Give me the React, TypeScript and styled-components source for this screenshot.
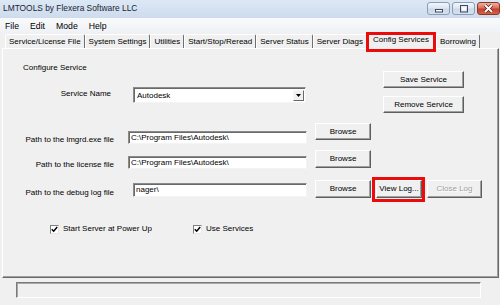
import styled, { createGlobalStyle, css } from 'styled-components';

const Global = createGlobalStyle`
  html, body {
    margin: 0;
    padding: 0;
    background: #f0f0f0;
  }
  body {
    font-family: 'Liberation Sans', Arial, sans-serif;
    font-size: 8px;
    color: #000;
  }
`;

const redMark = (l: number, r: number, t: number, b: number) => css`
  &::after {
    content: '';
    position: absolute;
    left: ${-l}px;
    right: ${-r}px;
    top: ${-t}px;
    bottom: ${-b}px;
    border: 3px solid #ec0b0b;
    pointer-events: none;
  }
`;

const Window = styled.div`
  width: 500px;
  height: 305px;
  overflow: hidden;
  display: flex;
  flex-direction: column;
  background: #f0f0f0;
`;

const TitleBar = styled.div`
  height: 18px;
  flex-shrink: 0;
  display: flex;
  align-items: flex-start;
  justify-content: space-between;
  background: linear-gradient(#dde8f5, #cddbed);
`;

const Title = styled.span`
  font-size: 8.4px;
  line-height: 16px;
  padding-left: 3px;
  color: #1b2533;
`;

const WinControls = styled.div`
  display: flex;
  gap: 2px;
  padding-top: 2px;
`;

const WinBtn = styled.div<{ $close?: boolean }>`
  width: 23px;
  height: 13px;
  box-sizing: border-box;
  border-radius: 3px;
  display: flex;
  align-items: center;
  justify-content: center;
  border: 1px solid ${(p) => (p.$close ? '#8e3524' : '#8b9cb5')};
  background: ${(p) =>
    p.$close
      ? 'linear-gradient(#eeb1a2, #d8705c 45%, #c4402a 55%, #d2634a)'
      : 'linear-gradient(#f3f6fb, #dde6f2 45%, #cbd8ea 55%, #d6e1ef)'};
`;

const MenuBar = styled.div`
  height: 15px;
  flex-shrink: 0;
  display: flex;
  align-items: center;
  gap: 11px;
  padding-left: 5px;
  font-size: 8.7px;
  background: linear-gradient(#f9fafc, #eef1f5);
`;

const TabStrip = styled.div`
  height: 15px;
  flex-shrink: 0;
  display: flex;
  align-items: flex-end;
  padding-left: 5px;
  position: relative;
  z-index: 2;
`;

const Tab = styled.div<{ $active?: boolean; $mark?: boolean }>`
  position: relative;
  box-sizing: border-box;
  height: ${(p) => (p.$active ? 17 : 14)}px;
  margin: 0 ${(p) => (p.$active ? 1 : 0)}px ${(p) => (p.$active ? -1 : 0)}px
    ${(p) => (p.$active ? 1 : 0)}px;
  padding: 0 ${(p) => (p.$active ? 5 : 3)}px 0 ${(p) => (p.$active ? 4 : 3)}px;
  line-height: ${(p) => (p.$active ? 14 : 13)}px;
  background: #f0f0f0;
  border-top: 1px solid #fff;
  border-left: 1px solid #fff;
  border-right: 1px solid #6f6f6f;
  border-radius: 2px 2px 0 0;
  white-space: nowrap;
  ${(p) => p.$mark && redMark(3, 2, 1, 3)}
`;

const Panel = styled.div`
  margin: 0 1px 0 2px;
  height: 230px;
  flex-shrink: 0;
  box-sizing: border-box;
  border: 1px solid;
  border-color: #fff #696969 #696969 #fff;
  box-shadow: inset -1px -1px #a0a0a0;
  display: flex;
  flex-direction: column;
`;

const TopSection = styled.div`
  display: flex;
  margin-top: 14px;
`;

const LeftCol = styled.div`
  display: flex;
  flex-direction: column;
`;

const Heading = styled.div`
  line-height: 10px;
  margin-left: 20px;
`;

const RightCol = styled.div`
  margin-left: auto;
  margin-right: 34px;
  margin-top: 8px;
  display: flex;
  flex-direction: column;
  gap: 8px;
`;

const Row = styled.div<{ $gap: number }>`
  display: flex;
  align-items: flex-start;
  margin-top: ${(p) => p.$gap}px;
`;

const Label = styled.div<{ $w: number; $drop: number }>`
  width: ${(p) => p.$w}px;
  text-align: right;
  line-height: 10px;
  margin-top: ${(p) => p.$drop}px;
  white-space: nowrap;
`;

const Field = styled.div<{ $left: number; $w: number; $drop: number; $h: number }>`
  box-sizing: border-box;
  margin-left: ${(p) => p.$left}px;
  margin-top: ${(p) => p.$drop}px;
  width: ${(p) => p.$w}px;
  height: ${(p) => p.$h}px;
  background: #fff;
  border: 1px solid;
  border-color: #8a8a8a #f4f4f4 #f4f4f4 #8a8a8a;
  box-shadow: inset 1px 1px #696969;
  padding-left: 2px;
  line-height: ${(p) => p.$h - 2}px;
  white-space: nowrap;
  overflow: hidden;
`;

const Combo = styled.div`
  box-sizing: border-box;
  margin-left: 22px;
  width: 173px;
  height: 16px;
  background: #fff;
  border: 1px solid;
  border-color: #8a8a8a #f4f4f4 #f4f4f4 #8a8a8a;
  box-shadow: inset 1px 1px #696969;
  display: flex;
  align-items: center;
  padding: 2px 1px 1px 3px;
`;

const ComboText = styled.span`
  flex: 1;
  line-height: 11px;
`;

const ComboArrow = styled.div`
  box-sizing: border-box;
  width: 11px;
  height: 11px;
  background: #f0f0f0;
  border: 1px solid;
  border-color: #f8f8f8 #696969 #696969 #f8f8f8;
  display: flex;
  align-items: center;
  justify-content: center;
`;

const Button = styled.div<{ $w: number; $h?: number; $left?: number; $off?: boolean; $mark?: boolean }>`
  position: relative;
  box-sizing: border-box;
  width: ${(p) => p.$w}px;
  height: ${(p) => p.$h ?? 17}px;
  margin-left: ${(p) => p.$left ?? 0}px;
  flex-shrink: 0;
  background: #f0f0f0;
  border: 1px solid;
  border-color: #fff #5e5e5e #5e5e5e #fff;
  box-shadow: inset -1px -1px #a0a0a0;
  text-align: center;
  line-height: ${(p) => (p.$h ?? 17) - 2}px;
  white-space: nowrap;
  color: ${(p) => (p.$off ? '#a0a0a0' : '#000')};
  text-shadow: ${(p) => (p.$off ? '1px 1px #fff' : 'none')};
  ${(p) => p.$mark && redMark(5, 4, 4, 5)}
`;

const CheckRow = styled.div`
  display: flex;
  align-items: center;
  margin-top: 26px;
  padding-left: 47px;
  height: 10px;
`;

const CheckItem = styled.label<{ $w?: number }>`
  display: flex;
  align-items: center;
  gap: 4px;
  width: ${(p) => (p.$w ? `${p.$w}px` : 'auto')};
  line-height: 10px;
`;

const Box = styled.span`
  box-sizing: border-box;
  width: 9px;
  height: 9px;
  background: #fff;
  border: 1px solid;
  border-color: #808080 #e8e8e8 #e8e8e8 #808080;
  display: flex;
  align-items: center;
  justify-content: center;
`;

const StatusArea = styled.div`
  flex: 1;
  padding: 4px 0 0 16px;
`;

const StatusBox = styled.div`
  box-sizing: border-box;
  width: 465px;
  height: 16px;
  border: 1px solid;
  border-color: #7a7a7a #fff #fff #7a7a7a;
  box-shadow: inset 1px 1px #a8a8a8;
`;

function Check() {
  return (
    <Box>
      <svg width="7" height="7" viewBox="0 0 7 7">
        <path d="M0.8 3.2 L2.7 5.2 L6.2 1" fill="none" stroke="#000" strokeWidth="1.5" />
      </svg>
    </Box>
  );
}

const tabs = [
  'Service/License File',
  'System Settings',
  'Utilities',
  'Start/Stop/Reread',
  'Server Status',
  'Server Diags',
  'Config Services',
  'Borrowing',
];

export default function App() {
  return (
    <>
      <Global />
      <Window>
        <TitleBar>
          <Title>LMTOOLS by Flexera Software LLC</Title>
          <WinControls>
            <WinBtn>
              <svg width="10" height="8" viewBox="0 0 10 8">
                <rect x="1.5" y="4.5" width="7" height="2.5" fill="#fff" stroke="#3c4a5e" strokeWidth="1" />
              </svg>
            </WinBtn>
            <WinBtn>
              <svg width="10" height="8" viewBox="0 0 10 8">
                <rect x="1.5" y="0.5" width="7" height="6.5" fill="none" stroke="#3c4a5e" strokeWidth="1" />
                <rect x="3" y="2.5" width="4" height="3" fill="#fff" />
              </svg>
            </WinBtn>
            <WinBtn $close>
              <svg width="11" height="9" viewBox="0 0 11 9">
                <path d="M2 1 L9 8 M9 1 L2 8" stroke="#5a1d12" strokeWidth="3.2" />
                <path d="M2 1 L9 8 M9 1 L2 8" stroke="#fff" strokeWidth="1.8" />
              </svg>
            </WinBtn>
          </WinControls>
        </TitleBar>

        <MenuBar>
          <span>File</span>
          <span>Edit</span>
          <span>Mode</span>
          <span>Help</span>
        </MenuBar>

        <TabStrip>
          {tabs.map((t) => (
            <Tab key={t} $active={t === 'Config Services'} $mark={t === 'Config Services'}>
              {t}
            </Tab>
          ))}
        </TabStrip>

        <Panel>
          <TopSection>
            <LeftCol>
              <Heading>Configure Service</Heading>
              <Row $gap={14}>
                <Label $w={108} $drop={2}>Service Name</Label>
                <Combo>
                  <ComboText>Autodesk</ComboText>
                  <ComboArrow>
                    <svg width="5" height="3" viewBox="0 0 5 3">
                      <path d="M0 0 H5 L2.5 3 Z" fill="#000" />
                    </svg>
                  </ComboArrow>
                </Combo>
              </Row>
            </LeftCol>
            <RightCol>
              <Button $w={81}>Save Service</Button>
              <Button $w={81}>Remove Service</Button>
            </RightCol>
          </TopSection>

          <Row $gap={10}>
            <Label $w={111} $drop={12}>Path to the lmgrd.exe file</Label>
            <Field $left={14} $w={179} $drop={8} $h={13}>C:\Program Files\Autodesk\</Field>
            <Button $w={56} $left={8}>Browse</Button>
          </Row>

          <Row $gap={5}>
            <Label $w={111} $drop={10}>Path to the license file</Label>
            <Field $left={14} $w={179} $drop={6} $h={13}>C:\Program Files\Autodesk\</Field>
            <Button $w={56} $h={18} $left={8}>Browse</Button>
          </Row>

          <Row $gap={10}>
            <Label $w={111} $drop={8}>Path to the debug log file</Label>
            <Field $left={19} $w={174} $drop={3} $h={14}>nager\</Field>
            <Button $w={56} $h={18} $left={8}>Browse</Button>
            <Button $w={46} $h={18} $left={5} $mark>View Log...</Button>
            <Button $w={55} $h={18} $left={5} $off>Close Log</Button>
          </Row>

          <CheckRow>
            <CheckItem $w={143}>
              <Check />
              Start Server at Power Up
            </CheckItem>
            <CheckItem>
              <Check />
              Use Services
            </CheckItem>
          </CheckRow>
        </Panel>

        <StatusArea>
          <StatusBox />
        </StatusArea>
      </Window>
    </>
  );
}
